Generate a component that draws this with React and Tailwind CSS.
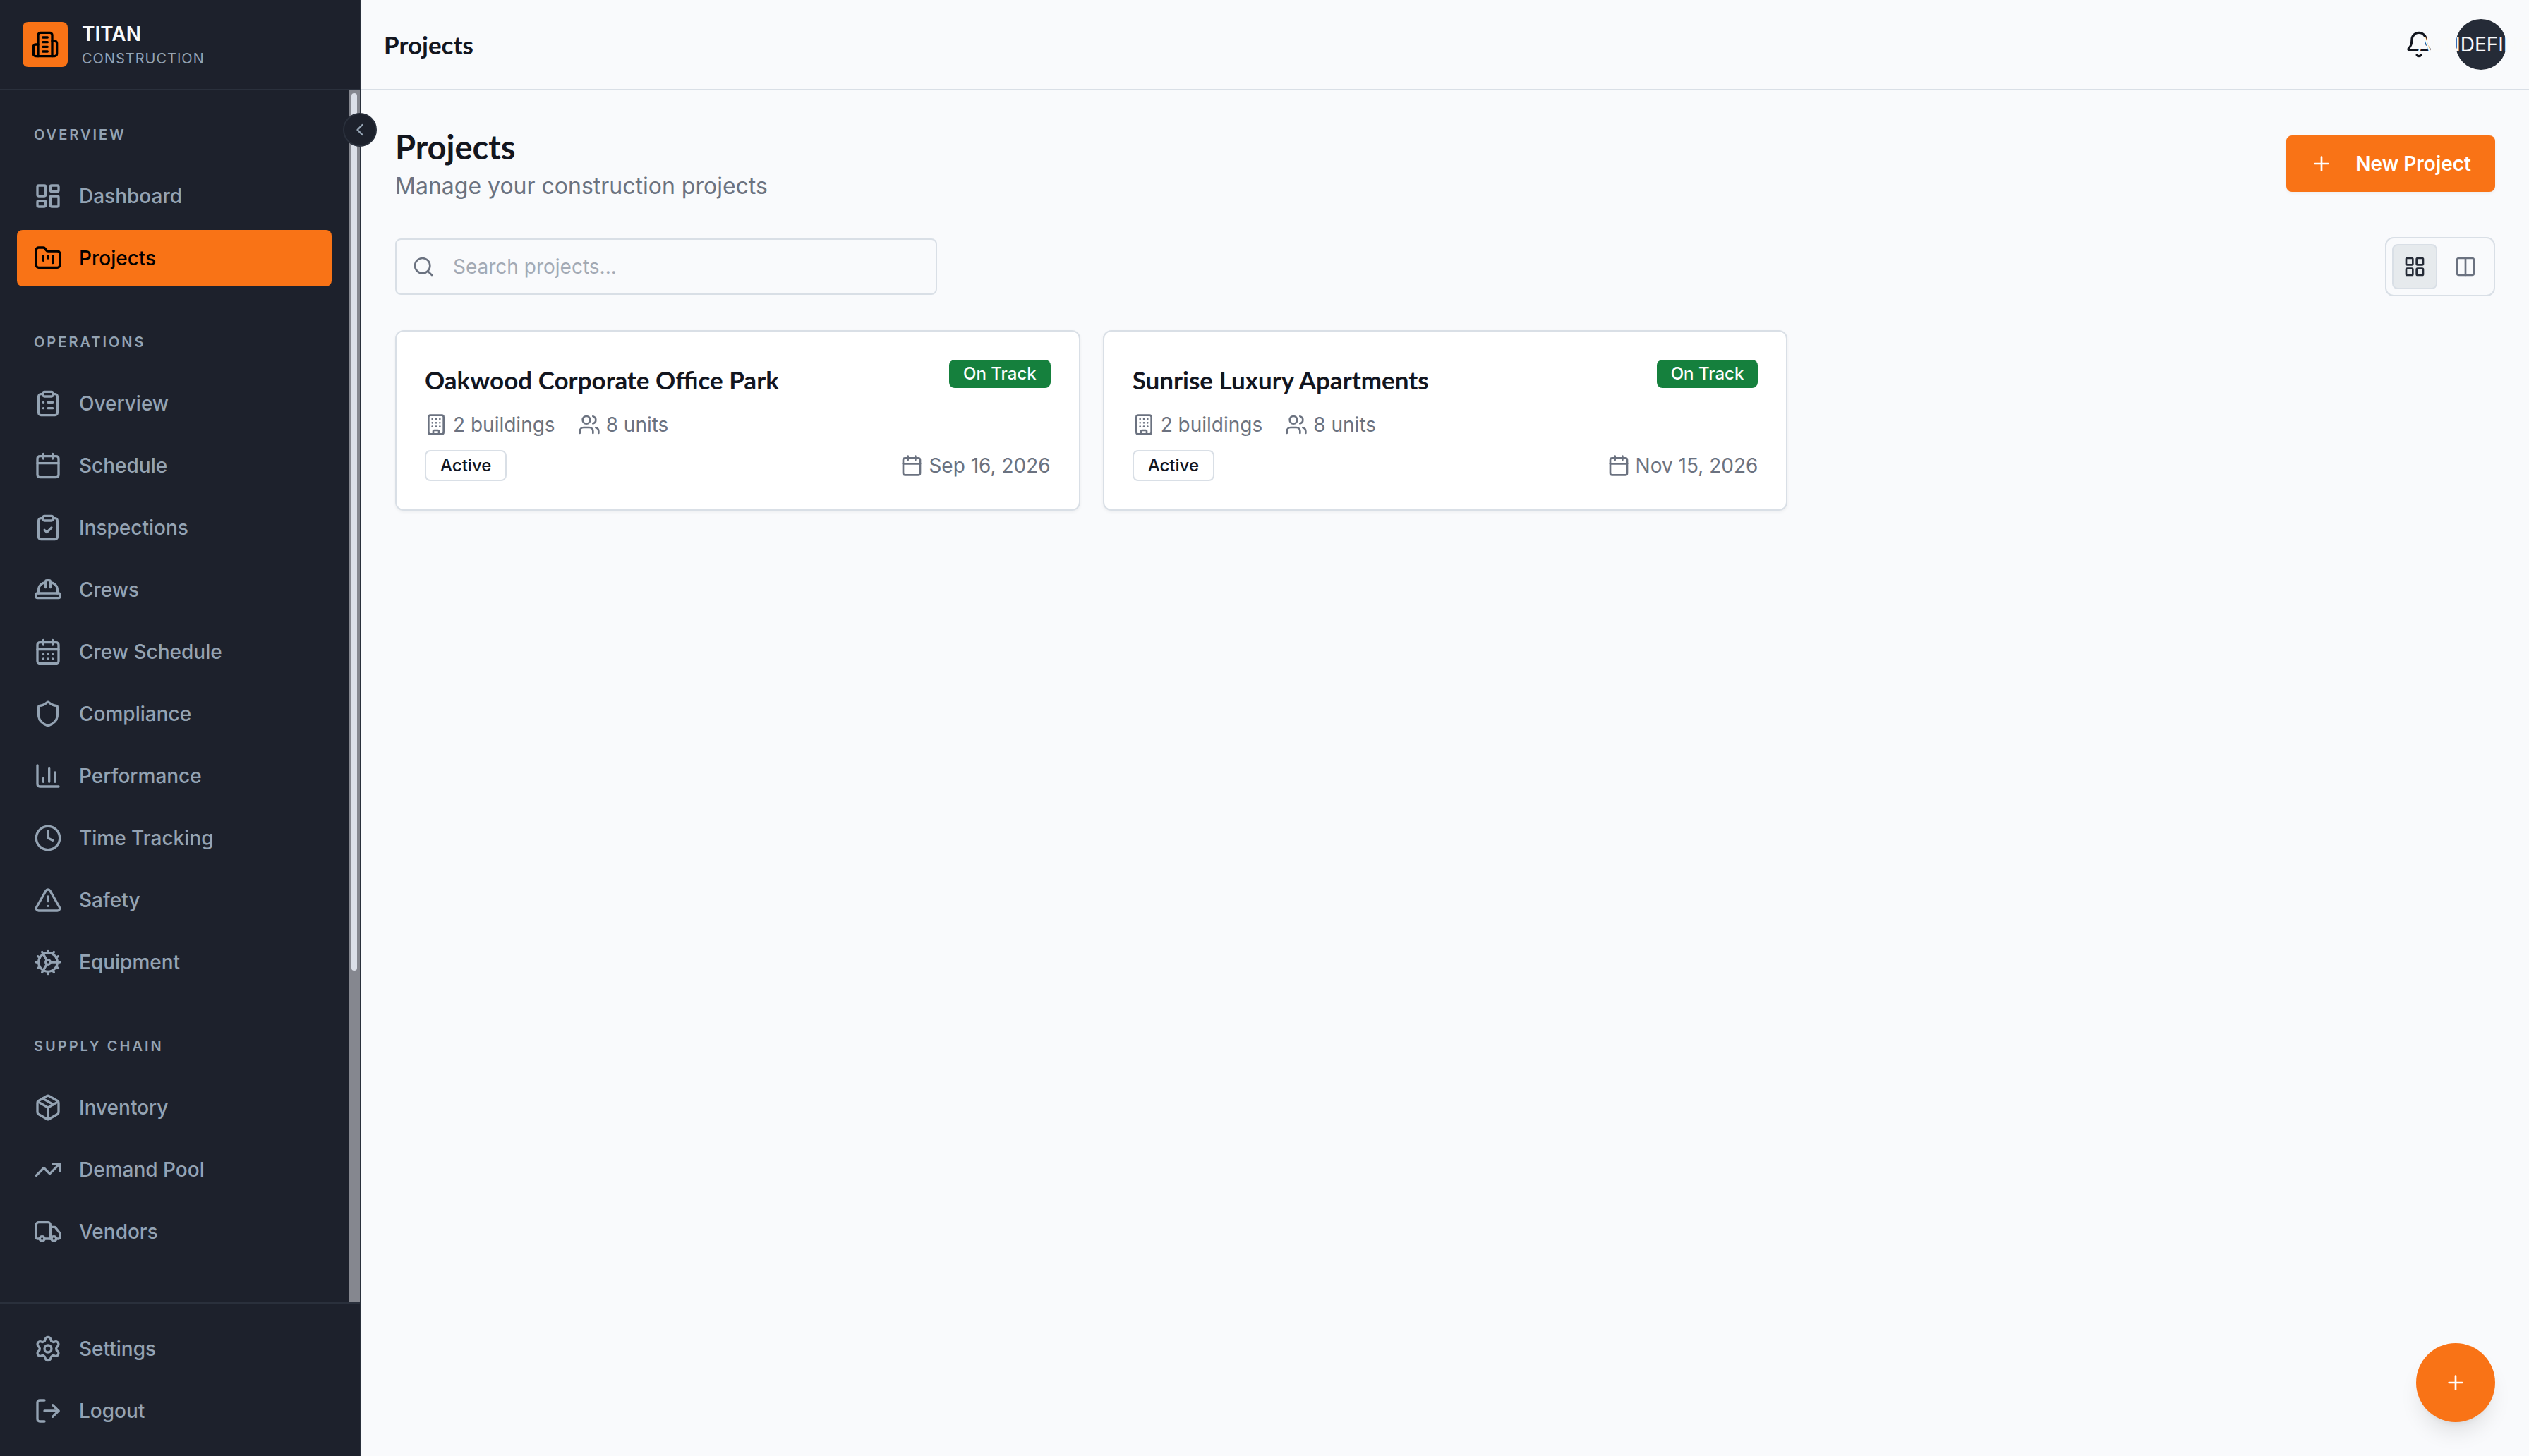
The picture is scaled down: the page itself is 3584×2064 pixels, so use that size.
import {
  Bell, Building, Calendar, CalendarDays, ChartColumn, ChevronLeft, ClipboardCheck,
  ClipboardList, Clock, Cog, Columns2, FolderKanban, HardHat, LayoutDashboard, LayoutGrid,
  LogOut, Package, Plus, Search, Settings, Shield, TrendingUp, TriangleAlert, Truck, Users,
} from "lucide-react";

const groups = [
  {
    label: "Overview",
    items: [
      { label: "Dashboard", icon: LayoutDashboard },
      { label: "Projects", icon: FolderKanban, active: true },
    ],
  },
  {
    label: "Operations",
    items: [
      { label: "Overview", icon: ClipboardList },
      { label: "Schedule", icon: Calendar },
      { label: "Inspections", icon: ClipboardCheck },
      { label: "Crews", icon: HardHat },
      { label: "Crew Schedule", icon: CalendarDays },
      { label: "Compliance", icon: Shield },
      { label: "Performance", icon: ChartColumn },
      { label: "Time Tracking", icon: Clock },
      { label: "Safety", icon: TriangleAlert },
      { label: "Equipment", icon: Cog },
    ],
  },
  {
    label: "Supply Chain",
    items: [
      { label: "Inventory", icon: Package },
      { label: "Demand Pool", icon: TrendingUp },
      { label: "Vendors", icon: Truck },
    ],
  },
];

const projects = [
  { name: "Oakwood Corporate Office Park", date: "Sep 16, 2026" },
  { name: "Sunrise Luxury Apartments", date: "Nov 15, 2026" },
];

/* Tower with two wings */
function LogoMark() {
  return (
    <svg viewBox="0 0 24 24" className="size-10" fill="none" stroke="currentColor" strokeWidth="2" strokeLinecap="round" strokeLinejoin="round" aria-hidden="true">
      <path d="M6 22V4a2 2 0 0 1 2-2h8a2 2 0 0 1 2 2v18Z" />
      <path d="M6 12H4a2 2 0 0 0-2 2v6a2 2 0 0 0 2 2h2" />
      <path d="M18 9h2a2 2 0 0 1 2 2v9a2 2 0 0 1-2 2h-2" />
      <path d="M10 6h4M10 10h4M10 14h4M10 18h4" />
    </svg>
  );
}

function NavItem({ label, icon: Icon, active }) {
  return (
    <a
      href="#"
      aria-current={active ? "page" : undefined}
      className={
        active
          ? "flex h-20 items-center gap-6 rounded-lg bg-[#f97316] px-6 text-[28px] leading-10 font-medium text-black"
          : "flex h-20 items-center gap-6 rounded-lg px-6 text-[28px] leading-10 font-medium text-[#94a3b3]"
      }
    >
      <Icon className="size-10 shrink-0" aria-hidden="true" />
      {label}
    </a>
  );
}

function Sidebar() {
  return (
    <aside className="relative flex w-[512px] shrink-0 flex-col border-r-2 border-[#2a303c] bg-[#1d212c]">
      <div className="flex h-32 shrink-0 items-center gap-5 border-b-2 border-[#2a303c] px-8">
        <div className="flex size-16 items-center justify-center rounded-lg bg-[#f97316] text-black">
          <LogoMark />
        </div>
        <div className="flex flex-col">
          <span className="text-[28px] leading-10 font-semibold text-[#f8fafc]">TITAN</span>
          <span className="text-[20px] leading-[30px] tracking-wider text-[#94a3b3] uppercase">Construction</span>
        </div>
      </div>
      <div className="flex min-h-0 flex-1">
        <nav aria-label="Main" className="flex min-w-0 flex-1 flex-col gap-12 overflow-hidden px-6 pt-8">
          {groups.map((g) => (
            <section key={g.label} className="flex shrink-0 flex-col gap-4">
              <h2 className="px-6 py-4 text-[20px] leading-[30px] font-semibold tracking-[0.15em] text-[#94a3b3] uppercase">
                {g.label}
              </h2>
              <div className="flex flex-col gap-2">
                {g.items.map((item) => (
                  <NavItem key={item.label} {...item} />
                ))}
              </div>
            </section>
          ))}
        </nav>
        <div className="w-4 shrink-0 bg-[#85878f] p-1" aria-hidden="true">
          <div className="h-8/11 rounded-full bg-[#dbdfe8]" />
        </div>
      </div>
      <div className="flex shrink-0 flex-col gap-2 border-t-2 border-[#2a303c] p-6">
        <NavItem label="Settings" icon={Settings} />
        <NavItem label="Logout" icon={LogOut} />
      </div>
      <button
        type="button"
        aria-label="Collapse sidebar"
        className="absolute top-40 -right-6 flex size-12 items-center justify-center rounded-full border-2 border-[#2a303c] bg-[#1d212c] text-[#94a3b3]"
      >
        <ChevronLeft className="size-7" />
      </button>
    </aside>
  );
}

function TopBar() {
  return (
    <header className="flex h-32 shrink-0 items-center justify-between border-b-2 border-[#d9dfe6] px-8">
      <p className="font-[Lato,sans-serif] text-[35px] leading-[56px] font-bold">Projects</p>
      <div className="flex items-center gap-8">
        <button type="button" aria-label="Notifications" className="flex size-10 items-center justify-center">
          <Bell className="size-10" />
        </button>
        <button
          type="button"
          aria-label="Account"
          className="flex size-[72px] items-center justify-center rounded-full bg-[#252b37] text-[28px] leading-10 text-[#fafafa]"
        >
          <span className="whitespace-nowrap">AUNDEFINED</span>
        </button>
      </div>
    </header>
  );
}

function ProjectCard({ name, date }) {
  return (
    <article className="flex flex-col gap-4 rounded-xl border-2 border-[#d9dfe6] bg-white p-10 shadow-[0_2px_4px_rgba(0,0,0,0.05)]">
      <div className="flex items-start justify-between">
        <h2 className="font-[Lato,sans-serif] text-[35px] leading-[56px] font-bold">{name}</h2>
        <span className="rounded-lg bg-[#15803d] px-5 py-1 text-[24px] leading-8 font-medium text-white">On Track</span>
      </div>
      <div className="flex gap-8 text-[28px] leading-10 text-[#6b7280]">
        <span className="flex items-center gap-2">
          <Building className="size-8" aria-hidden="true" />2 buildings
        </span>
        <span className="flex items-center gap-2">
          <Users className="size-8" aria-hidden="true" />8 units
        </span>
      </div>
      <div className="flex items-center justify-between">
        <span className="rounded-lg border-2 border-[#d9dfe6] px-5 py-1 text-[24px] leading-8 font-medium">Active</span>
        <span className="flex items-center gap-2 text-[28px] leading-10 text-[#6b7280]">
          <Calendar className="size-8" aria-hidden="true" />
          {date}
        </span>
      </div>
    </article>
  );
}

export default function App() {
  return (
    <div className="flex h-screen bg-[#f9fafc] font-[Inter,sans-serif] text-[#13161f]">
      <Sidebar />
      <div className="flex min-w-0 flex-1 flex-col overflow-hidden">
        <TopBar />
        <main className="flex flex-1 flex-col gap-12 p-12">
          <div className="flex items-center justify-between">
            <div>
              <h1 className="font-[Lato,sans-serif] text-[47px] leading-[64px] font-bold">Projects</h1>
              <p className="text-[32px] leading-[48px] text-[#6b7280]">Manage your construction projects</p>
            </div>
            <button
              type="button"
              className="flex h-20 items-center gap-8 rounded-lg border-2 border-[#f97316] bg-[#f97316] px-8 text-[28px] leading-10 font-semibold text-white shadow-[0_2px_4px_rgba(0,0,0,0.05)]"
            >
              <Plus className="size-8" aria-hidden="true" />
              New Project
            </button>
          </div>
          <div className="flex items-center justify-between">
            <label className="flex h-20 w-full max-w-3xl items-center gap-[26px] rounded-lg border-2 border-[#d9dfe6] px-[22px]">
              <Search className="size-8 shrink-0 text-[#6b7280]" aria-hidden="true" />
              <span className="sr-only">Search projects</span>
              <input
                type="text"
                placeholder="Search projects..."
                className="h-full min-w-0 flex-1 bg-transparent text-[28px] leading-10 outline-none placeholder:text-[#a3aab5]"
              />
            </label>
            <div className="flex gap-2 rounded-xl border-2 border-[#d9dfe6] p-2">
              <button
                type="button"
                aria-label="Grid view"
                aria-pressed="true"
                className="flex size-16 items-center justify-center rounded-lg border-2 border-[#d9dfe6] bg-[#e6eaed] text-[#252b37]"
              >
                <LayoutGrid className="size-8" />
              </button>
              <button
                type="button"
                aria-label="Board view"
                aria-pressed="false"
                className="flex size-16 items-center justify-center rounded-lg text-[#6b7280]"
              >
                <Columns2 className="size-8" />
              </button>
            </div>
          </div>
          <div className="grid grid-cols-3 gap-8">
            {projects.map((p) => (
              <ProjectCard key={p.name} {...p} />
            ))}
          </div>
        </main>
      </div>
      <button
        type="button"
        aria-label="Add project"
        className="fixed right-12 bottom-12 flex size-28 items-center justify-center rounded-full bg-[#f97316] text-white shadow-[0_20px_30px_-6px_rgba(0,0,0,0.1),0_8px_12px_-8px_rgba(0,0,0,0.1)]"
      >
        <Plus className="size-8" />
      </button>
    </div>
  );
}
